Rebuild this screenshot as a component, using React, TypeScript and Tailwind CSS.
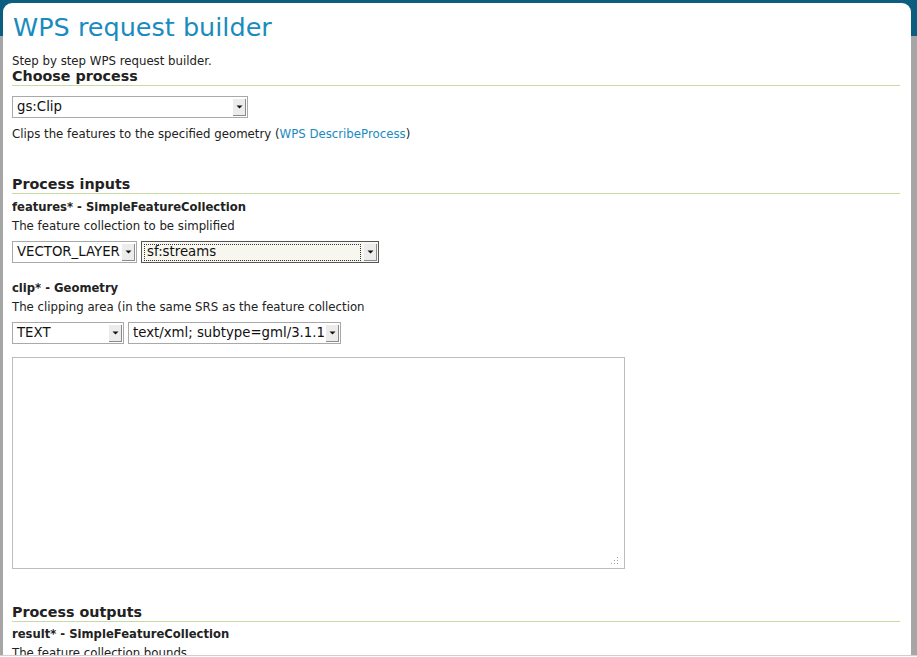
import React from "react";

const font = { fontFamily: '"DejaVu Sans", Verdana, sans-serif' };

function Arrow() {
  return (
    <div className="flex h-[17px] w-[13px] items-center justify-center border-b border-r border-b-[#8a8a8a] border-r-[#8a8a8a] bg-[#ececec]">
      <svg width="7" height="4" viewBox="0 0 7 4">
        <path d="M0.5 0.5 L6.5 0.5 L3.5 3.5 Z" fill="#111" />
      </svg>
    </div>
  );
}

function Select({
  value,
  width,
  focused = false,
}: {
  value: string;
  width: string;
  focused?: boolean;
}) {
  if (focused) {
    return (
      <div
        className={`flex h-[22px] ${width} items-center justify-between border border-[#555] bg-[#f7f7ef] pl-[2px] pr-[1px]`}
      >
        <div className="flex h-[17px] flex-1 items-center whitespace-nowrap border border-dotted border-[#333] pl-[2px] text-[13.3px] leading-none text-[#111]">
          {value}
        </div>
        <div className="ml-[3px]">
          <Arrow />
        </div>
      </div>
    );
  }
  return (
    <div
      className={`flex h-[22px] ${width} items-center justify-between border border-[#a9a9a9] bg-white pl-[4px] pr-[1px]`}
    >
      <span className="whitespace-nowrap text-[13.3px] leading-none text-[#111]">{value}</span>
      <Arrow />
    </div>
  );
}

function Heading({ children, className = "" }: { children: React.ReactNode; className?: string }) {
  return (
    <div
      className={`border-b border-[#c8dba3] text-[14.3px] font-bold leading-[17px] text-[#222] ${className}`}
    >
      {children}
    </div>
  );
}

export default function App() {
  return (
    <div
      className="relative h-[657px] w-[917px] overflow-hidden bg-[linear-gradient(#0b5e80_0px,#0b5e80_36px,#a6a6a6_36px,#a6a6a6_100%)] pl-[3px] pr-[6px] pt-[3px]"
      style={font}
    >
      <div className="h-full rounded-t-[9px] bg-white pl-[9px] pr-[11px] pt-[9px] text-[#222]">
        <h1 className="pl-[1px] text-[25.5px] font-normal leading-[30px] text-[#1a8bc0]">WPS request builder</h1>
        <p className="mt-[13px] text-[11.75px] leading-[13px]">Step by step WPS request builder.</p>
        <Heading>Choose process</Heading>

        <div className="mt-[10px]">
          <Select value="gs:Clip" width="w-[236px]" />
        </div>
        <p className="mt-[9px] text-[11.75px] leading-[14px]">
          Clips the features to the specified geometry (
          <span className="text-[#1a8bc0]">WPS DescribeProcess</span>)
        </p>

        <Heading className="mt-[35px]">Process inputs</Heading>

        <div className="mt-[4px] text-[11.6px] font-bold leading-[19px]">features* - SimpleFeatureCollection</div>
        <div className="text-[11.75px] leading-[19px]">The feature collection to be simplified</div>
        <div className="mt-[5px] flex gap-[4px]">
          <Select value="VECTOR_LAYER" width="w-[125px]" />
          <Select value="sf:streams" width="w-[238px]" focused />
        </div>

        <div className="mt-[16px] text-[11.6px] font-bold leading-[19px]">clip* - Geometry</div>
        <div className="text-[11.75px] leading-[19px]">The clipping area (in the same SRS as the feature collection</div>
        <div className="mt-[5px] flex gap-[4px]">
          <Select value="TEXT" width="w-[112px]" />
          <Select value="text/xml; subtype=gml/3.1.1" width="w-[213px]" />
        </div>

        <div className="relative mt-[13px] h-[212px] w-[613px] border border-[#bdbdbd] bg-white">
          <svg className="absolute bottom-[3px] right-[5px]" width="9" height="9" viewBox="0 0 9 9">
            <g fill="#9a9a9a">
              <rect x="7" y="1" width="1" height="1" />
              <rect x="7" y="4" width="1" height="1" />
              <rect x="7" y="7" width="1" height="1" />
              <rect x="4" y="4" width="1" height="1" />
              <rect x="4" y="7" width="1" height="1" />
              <rect x="1" y="7" width="1" height="1" />
            </g>
          </svg>
        </div>

        <Heading className="mt-[35px]">Process outputs</Heading>
        <div className="mt-[3px] text-[11.6px] font-bold leading-[19px]">result* - SimpleFeatureCollection</div>
        <div className="text-[11.75px] leading-[19px]">The feature collection bounds</div>
      </div>
      <div className="absolute bottom-0 left-0 h-[2px] w-full border-t border-[#cfcfcf] bg-white" />
    </div>
  );
}
